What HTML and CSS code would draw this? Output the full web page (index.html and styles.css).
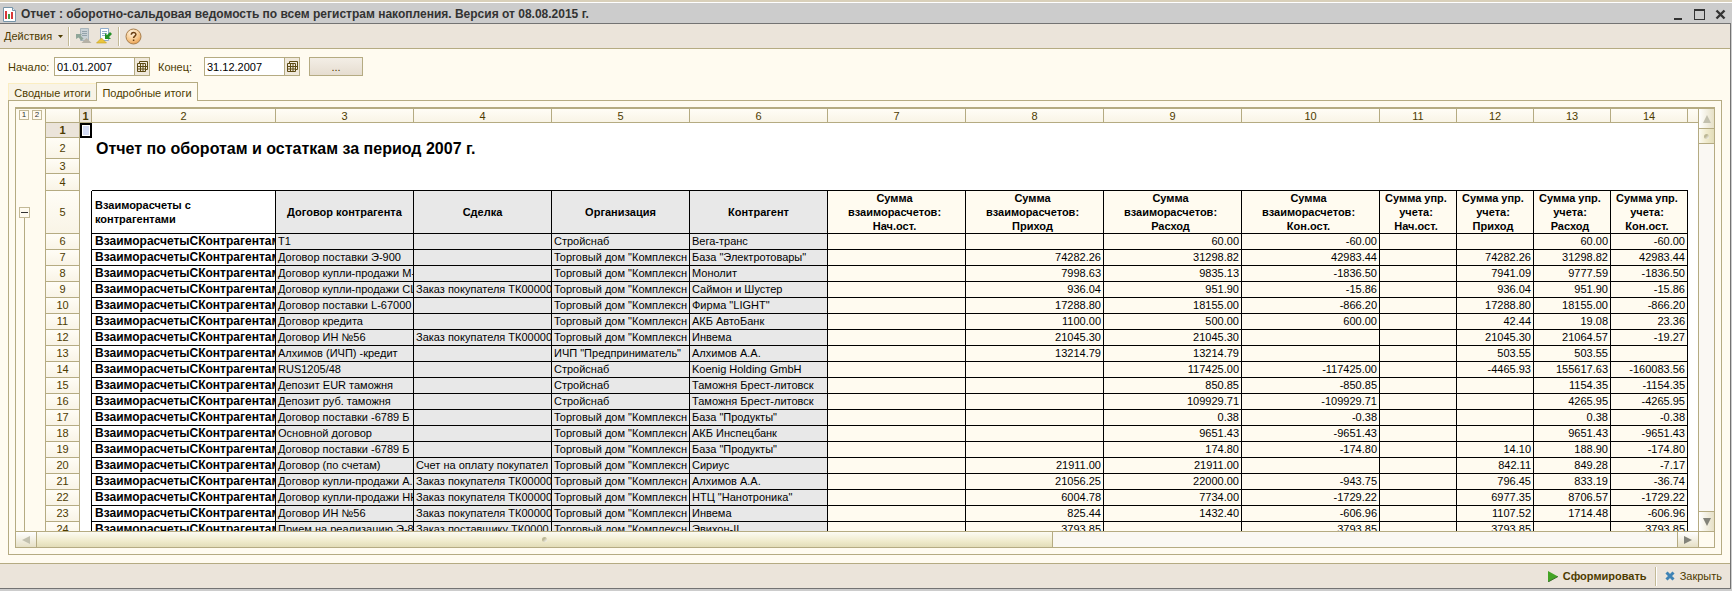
FILE: index.html
```html
<!DOCTYPE html>
<html lang="ru">
<head>
  <meta charset="UTF-8" />
  <meta name="viewport" content="width=device-width, initial-scale=1.0" />
  <title>Отчет : оборотно-сальдовая ведомость</title>
  <link rel="stylesheet" href="styles.css">
</head>
<body>

<header class="titlebar">
  <svg class="title-icon" width="13" height="15" viewBox="0 0 13 15">
    <path d="M.5.5h9l3 3v11H.5z" fill="#fff" stroke="#7795a8"/>
    <path d="M9.500.5v3h3" fill="#dbe6ee" stroke="#7795a8"/>
    <path d="M2 4h2v8H2z" fill="#d8383a"/>
    <path d="M5 7h2v5H5z" fill="#3f9c46"/>
    <path d="M8 5h2v7H8z" fill="#d8383a"/>
  </svg>
  <h1>Отчет : оборотно-сальдовая ведомость по всем регистрам накопления. Версия от 08.08.2015 г.</h1>
  <div class="window-buttons">
    <button aria-label="Свернуть"><svg width="11" height="11"><path d="M1 9h8v2H1z" fill="#333"/></svg></button>
    <button aria-label="Развернуть"><svg width="11" height="11"><path d="M0 0h11v11H0zM1 2v8h9V2z" fill="#333" fill-rule="evenodd"/></svg></button>
    <button aria-label="Закрыть окно"><svg width="11" height="11"><path d="M1.500 1.500l8 8M9.500 1.500l-8 8" stroke="#333" stroke-width="2.400"/></svg></button>
  </div>
</header>

<main class="window">
  <div class="toolbar">
    <button class="menu-button">Действия <svg width="5" height="3"><path d="M0 0h5L2.500 3z" fill="#4d3b00"/></svg></button>
    <span class="separator"></span>
    <button class="tool" aria-label="Восстановить значения">
      <svg width="17" height="16" viewBox="0 0 17 16">
        <path d="M5.500.500h8v12h-8z" fill="#c9d1d5" stroke="#a9b5bb"/>
        <path d="M7 3.500h5M7 5.500h5M7 7.500h5" stroke="#93a3ab"/>
        <path d="M1 6h6L5.500 7.500l3 3-2 2-3-3L1 11z" fill="#8fa598"/>
        <path d="M11.500 10l5 5h-10z" fill="#b5b1a6"/>
      </svg>
    </button>
    <button class="tool" aria-label="Сохранить значения">
      <svg width="17" height="16" viewBox="0 0 17 16">
        <path d="M4.500.500h8v12h-8z" fill="#fff" stroke="#8faccb"/>
        <path d="M6 3.500h5M6 5.500h5M6 7.500h4" stroke="#93aecb"/>
        <path d="M14 4l2 2-3 3 2 2H9V5l2 2z" fill="#249028"/>
        <path d="M5.500 10l5 5h-10z" fill="#eac53c" stroke="#c49d1b" stroke-width=".6"/>
      </svg>
    </button>
    <span class="separator"></span>
    <button class="tool" aria-label="Справка">
      <svg width="17" height="17" viewBox="0 0 17 17">
        <defs>
          <radialGradient id="help" cx=".4" cy=".25" r=".8">
            <stop offset="0" stop-color="#fff6e4"/>
            <stop offset=".6" stop-color="#f7c98d"/>
            <stop offset="1" stop-color="#e79b4b"/>
          </radialGradient>
        </defs>
        <circle cx="8.500" cy="8.500" r="7.500" fill="url(#help)" stroke="#a8804f"/>
        <path d="M6.300 6.800c0-3 4.600-3 4.600-.3 0 1.600-2.300 1.700-2.300 3.600M8.600 11.500v1.500" fill="none" stroke="#6b3f12" stroke-width="1.500"/>
      </svg>
    </button>
  </div>

  <form class="period">
    <label for="dateFrom">Начало:</label>
    <span class="date-field">
      <input type="text" id="dateFrom" value="01.01.2007" />
      <button type="button" aria-label="Выбрать начало"><svg width="11" height="11"><path d="M2.500 2.500v-2h8v8h-2M.500 2.500h8v8h-8zM.500 5.500h10M.500 8h8M3.500 2.500v8M6 2.500v8" fill="none" stroke="#5c4a12"/></svg></button>
    </span>
    <label for="dateTo">Конец:</label>
    <span class="date-field">
      <input type="text" id="dateTo" value="31.12.2007" />
      <button type="button" aria-label="Выбрать конец"><svg width="11" height="11"><path d="M2.500 2.500v-2h8v8h-2M.500 2.500h8v8h-8zM.500 5.500h10M.500 8h8M3.500 2.500v8M6 2.500v8" fill="none" stroke="#5c4a12"/></svg></button>
    </span>
    <button type="button" class="more">...</button>
  </form>

  <nav class="tabs" role="tablist">
    <button class="tab" role="tab">Сводные итоги</button>
    <button class="tab active" role="tab" aria-selected="true">Подробные итоги</button>
  </nav>

  <section class="tab-panel">
    <div class="sheet">
      <div class="groups">
        <div class="levels"><button>1</button><button>2</button></div>
        <button class="collapse" aria-label="Свернуть группу"></button>
        <div class="group-line"></div>
      </div>

      <div class="cells">
        <table>
          <colgroup>
            <col class="w-head"><col class="w-first"><col class="w-name">
            <col class="w-wide"><col class="w-wide"><col class="w-wide"><col class="w-wide">
            <col class="w-wide"><col class="w-wide"><col class="w-wide"><col class="w-wide">
            <col class="w-sum"><col class="w-sum"><col class="w-sum"><col class="w-sum"><col>
          </colgroup>
          <thead>
            <tr><th></th><th class="current">1</th><th>2</th><th>3</th><th>4</th><th>5</th><th>6</th><th>7</th><th>8</th><th>9</th><th>10</th><th>11</th><th>12</th><th>13</th><th>14</th><th></th></tr>
          </thead>
          <tbody>
            <tr class="h-small"><th class="current">1</th><td class="cursor"></td><td colspan="14"></td></tr>
            <tr class="h-title"><th>2</th><td></td><td colspan="14" class="report-title">Отчет по оборотам и остаткам за период 2007 г.</td></tr>
            <tr class="h-small"><th>3</th><td></td><td colspan="14"></td></tr>
            <tr class="h-gap"><th>4</th><td></td><td></td><td></td><td></td><td></td><td></td><td></td><td></td><td></td><td></td><td></td><td></td><td></td><td></td><td></td></tr>
            <tr class="captions"><th>5</th><td></td><td>Взаиморасчеты с контрагентами</td><td>Договор контрагента</td><td>Сделка</td><td>Организация</td><td>Контрагент</td><td>Сумма взаиморасчетов: Нач.ост.</td><td>Сумма взаиморасчетов: Приход</td><td>Сумма взаиморасчетов: Расход</td><td>Сумма взаиморасчетов: Кон.ост.</td><td>Сумма упр. учета: Нач.ост.</td><td>Сумма упр. учета: Приход</td><td>Сумма упр. учета: Расход</td><td>Сумма упр. учета: Кон.ост.</td><td></td></tr>
            <tr class="row"><th>6</th><td></td><td>ВзаиморасчетыСКонтрагентам</td><td>Т1</td><td></td><td>Стройснаб</td><td>Вега-транс</td><td></td><td></td><td>60.00</td><td>-60.00</td><td></td><td></td><td>60.00</td><td>-60.00</td><td></td></tr>
            <tr class="row"><th>7</th><td></td><td>ВзаиморасчетыСКонтрагентам</td><td>Договор поставки Э-900</td><td></td><td>Торговый дом "Комплексн</td><td>База "Электротовары"</td><td></td><td>74282.26</td><td>31298.82</td><td>42983.44</td><td></td><td>74282.26</td><td>31298.82</td><td>42983.44</td><td></td></tr>
            <tr class="row"><th>8</th><td></td><td>ВзаиморасчетыСКонтрагентам</td><td>Договор купли-продажи М-</td><td></td><td>Торговый дом "Комплексн</td><td>Монолит</td><td></td><td>7998.63</td><td>9835.13</td><td>-1836.50</td><td></td><td>7941.09</td><td>9777.59</td><td>-1836.50</td><td></td></tr>
            <tr class="row"><th>9</th><td></td><td>ВзаиморасчетыСКонтрагентам</td><td>Договор купли-продажи СШ</td><td>Заказ покупателя ТК00000</td><td>Торговый дом "Комплексн</td><td>Саймон и Шустер</td><td></td><td>936.04</td><td>951.90</td><td>-15.86</td><td></td><td>936.04</td><td>951.90</td><td>-15.86</td><td></td></tr>
            <tr class="row"><th>10</th><td></td><td>ВзаиморасчетыСКонтрагентам</td><td>Договор поставки L-67000</td><td></td><td>Торговый дом "Комплексн</td><td>Фирма "LIGHT"</td><td></td><td>17288.80</td><td>18155.00</td><td>-866.20</td><td></td><td>17288.80</td><td>18155.00</td><td>-866.20</td><td></td></tr>
            <tr class="row"><th>11</th><td></td><td>ВзаиморасчетыСКонтрагентам</td><td>Договор кредита</td><td></td><td>Торговый дом "Комплексн</td><td>АКБ АвтоБанк</td><td></td><td>1100.00</td><td>500.00</td><td>600.00</td><td></td><td>42.44</td><td>19.08</td><td>23.36</td><td></td></tr>
            <tr class="row"><th>12</th><td></td><td>ВзаиморасчетыСКонтрагентам</td><td>Договор ИН №56</td><td>Заказ покупателя ТК00000</td><td>Торговый дом "Комплексн</td><td>Инвема</td><td></td><td>21045.30</td><td>21045.30</td><td></td><td></td><td>21045.30</td><td>21064.57</td><td>-19.27</td><td></td></tr>
            <tr class="row"><th>13</th><td></td><td>ВзаиморасчетыСКонтрагентам</td><td>Алхимов (ИЧП) -кредит</td><td></td><td>ИЧП "Предприниматель"</td><td>Алхимов А.А.</td><td></td><td>13214.79</td><td>13214.79</td><td></td><td></td><td>503.55</td><td>503.55</td><td></td><td></td></tr>
            <tr class="row"><th>14</th><td></td><td>ВзаиморасчетыСКонтрагентам</td><td>RUS1205/48</td><td></td><td>Стройснаб</td><td>Koenig Holding GmbH</td><td></td><td></td><td>117425.00</td><td>-117425.00</td><td></td><td>-4465.93</td><td>155617.63</td><td>-160083.56</td><td></td></tr>
            <tr class="row"><th>15</th><td></td><td>ВзаиморасчетыСКонтрагентам</td><td>Депозит EUR таможня</td><td></td><td>Стройснаб</td><td>Таможня Брест-литовск</td><td></td><td></td><td>850.85</td><td>-850.85</td><td></td><td></td><td>1154.35</td><td>-1154.35</td><td></td></tr>
            <tr class="row"><th>16</th><td></td><td>ВзаиморасчетыСКонтрагентам</td><td>Депозит руб. таможня</td><td></td><td>Стройснаб</td><td>Таможня Брест-литовск</td><td></td><td></td><td>109929.71</td><td>-109929.71</td><td></td><td></td><td>4265.95</td><td>-4265.95</td><td></td></tr>
            <tr class="row"><th>17</th><td></td><td>ВзаиморасчетыСКонтрагентам</td><td>Договор поставки -6789 Б</td><td></td><td>Торговый дом "Комплексн</td><td>База "Продукты"</td><td></td><td></td><td>0.38</td><td>-0.38</td><td></td><td></td><td>0.38</td><td>-0.38</td><td></td></tr>
            <tr class="row"><th>18</th><td></td><td>ВзаиморасчетыСКонтрагентам</td><td>Основной договор</td><td></td><td>Торговый дом "Комплексн</td><td>АКБ Инспецбанк</td><td></td><td></td><td>9651.43</td><td>-9651.43</td><td></td><td></td><td>9651.43</td><td>-9651.43</td><td></td></tr>
            <tr class="row"><th>19</th><td></td><td>ВзаиморасчетыСКонтрагентам</td><td>Договор поставки -6789 Б</td><td></td><td>Торговый дом "Комплексн</td><td>База "Продукты"</td><td></td><td></td><td>174.80</td><td>-174.80</td><td></td><td>14.10</td><td>188.90</td><td>-174.80</td><td></td></tr>
            <tr class="row"><th>20</th><td></td><td>ВзаиморасчетыСКонтрагентам</td><td>Договор (по счетам)</td><td>Счет на оплату покупател</td><td>Торговый дом "Комплексн</td><td>Сириус</td><td></td><td>21911.00</td><td>21911.00</td><td></td><td></td><td>842.11</td><td>849.28</td><td>-7.17</td><td></td></tr>
            <tr class="row"><th>21</th><td></td><td>ВзаиморасчетыСКонтрагентам</td><td>Договор купли-продажи А.</td><td>Заказ покупателя ТК00000</td><td>Торговый дом "Комплексн</td><td>Алхимов А.А.</td><td></td><td>21056.25</td><td>22000.00</td><td>-943.75</td><td></td><td>796.45</td><td>833.19</td><td>-36.74</td><td></td></tr>
            <tr class="row"><th>22</th><td></td><td>ВзаиморасчетыСКонтрагентам</td><td>Договор купли-продажи НН</td><td>Заказ покупателя ТК00000</td><td>Торговый дом "Комплексн</td><td>НТЦ "Нанотроника"</td><td></td><td>6004.78</td><td>7734.00</td><td>-1729.22</td><td></td><td>6977.35</td><td>8706.57</td><td>-1729.22</td><td></td></tr>
            <tr class="row"><th>23</th><td></td><td>ВзаиморасчетыСКонтрагентам</td><td>Договор ИН №56</td><td>Заказ покупателя ТК00000</td><td>Торговый дом "Комплексн</td><td>Инвема</td><td></td><td>825.44</td><td>1432.40</td><td>-606.96</td><td></td><td>1107.52</td><td>1714.48</td><td>-606.96</td><td></td></tr>
            <tr class="row"><th>24</th><td></td><td>ВзаиморасчетыСКонтрагентам</td><td>Прием на реализацию Э-89</td><td>Заказ поставщику ТК0000</td><td>Торговый дом "Комплексн</td><td>Эвихон-II</td><td></td><td>3793.85</td><td></td><td>3793.85</td><td></td><td>3793.85</td><td></td><td>3793.85</td><td></td></tr>
          </tbody>
        </table>
      </div>

      <div class="vscroll">
        <button aria-label="Вверх"><svg width="8" height="8"><path d="M4 0l4 8H0z" fill="#c2c0ae"/></svg></button>
        <div class="thumb"><span class="grip"></span></div>
        <div class="track"></div>
        <button aria-label="Вниз"><svg width="8" height="8"><path d="M0 0h8L4 8z" fill="#83837a"/></svg></button>
      </div>
      <div class="hscroll">
        <button aria-label="Влево"><svg width="8" height="8"><path d="M8 0v8L0 4z" fill="#c2c0ae"/></svg></button>
        <div class="thumb"><span class="grip"></span></div>
        <div class="track"></div>
        <button aria-label="Вправо"><svg width="8" height="8"><path d="M0 0v8l8-4z" fill="#83837a"/></svg></button>
      </div>
      <div class="corner"></div>
    </div>
  </section>

  <footer class="actions">
    <button class="run"><svg width="10" height="11"><path d="M0 0l10 5.500L0 11z" fill="#43a425"/><path d="M0 11l10-5.500" stroke="#3b6b2c"/></svg>Сформировать</button>
    <span class="separator"></span>
    <button><svg width="10" height="10"><path d="M1.500 1.500l7 7M8.500 1.500l-7 7" stroke="#3f83b5" stroke-width="3"/></svg>Закрыть</button>
  </footer>
</main>

</body>
</html>
```

FILE: styles.css
```css
    * {
      box-sizing: border-box;
    }

    body {
      margin: 0;
      height: 100vh;
      display: flex;
      flex-direction: column;
      background: #ccc;
      border-top: 2px solid #d9d0ba;
      font-family: "Liberation Sans", Arial, sans-serif;
      font-size: 11px;
      color: #4d3b00;
      overflow: hidden;
    }

    button,
    input {
      font: inherit;
      color: inherit;
      margin: 0;
      padding: 0;
      border: none;
      border-radius: 0;
      background: none;
    }

    svg {
      display: block;
    }

    /* title bar */
    .titlebar {
      height: 21px;
      flex: none;
      display: flex;
      align-items: center;
      gap: 5px;
      padding: 2px 6px 0 3px;
      border-top: 1px solid #fff;
    }

    .titlebar h1 {
      flex: 1;
      margin: 0;
      font-size: 12px;
      font-weight: bold;
      color: #333;
    }

    .window-buttons {
      display: flex;
      gap: 10px;
    }

    /* window body */
    .window {
      flex: 1;
      min-height: 0;
      display: flex;
      flex-direction: column;
      margin: 0 1px 2px 0;
      border: 1px solid #737373;
      border-left: none;
      background: #fffbf0;
    }

    .toolbar {
      height: 25px;
      flex: none;
      display: flex;
      align-items: center;
      padding-left: 4px;
      background: #ebe4da;
      border-bottom: 1px solid #b5ab82;
    }

    .menu-button {
      display: flex;
      align-items: center;
      gap: 6px;
      margin-right: 2px;
    }

    .tool {
      display: flex;
      margin: 0 2px;
    }

    .separator {
      width: 2px;
      height: 19px;
      border-left: 1px solid #c3b996;
      border-right: 1px solid #fff;
      margin: 0 3px;
    }

    .period {
      display: flex;
      align-items: center;
      flex: none;
      padding: 8px 8px 0;
    }

    .period label {
      width: 46px;
    }

    .date-field {
      display: flex;
      width: 96px;
      height: 19px;
      margin-right: 8px;
      border: 1px solid #b5ab82;
      background: #fff;
    }

    .date-field input {
      flex: 1;
      min-width: 0;
      padding-left: 2px;
      color: #000;
    }

    .date-field button {
      width: 15px;
      display: flex;
      align-items: center;
      justify-content: center;
      border-left: 1px solid #b5ab82;
      background: #f0e9dc;
    }

    .more {
      width: 54px;
      height: 19px;
      margin-left: 1px;
      border: 1px solid #b5ab82;
      background: linear-gradient(#f3eee6, #e6ddd0);
    }

    /* tabs */
    .tabs {
      display: flex;
      align-items: flex-end;
      flex: none;
      padding: 6px 8px 0;
    }

    .tab {
      width: 88px;
      height: 17px;
      padding-top: 1px;
      background: #f8f3e6;
      border-top: 1px solid #fbeec2;
      border-left: 1px solid #fbeec2;
    }

    .tab.active {
      position: relative;
      z-index: 1;
      width: 102px;
      height: 19px;
      margin-bottom: -1px;
      background: #fffbf0;
      border: 1px solid #b5ab82;
      border-bottom: none;
    }

    .tab-panel {
      flex: 1;
      min-height: 0;
      display: flex;
      margin: 0 8px 8px;
      padding: 6px;
      border: 1px solid #b5ab82;
    }

    /* spreadsheet */
    .sheet {
      flex: 1;
      min-width: 0;
      display: grid;
      grid-template-columns: 29px minmax(0, 1fr) 16px;
      grid-template-rows: minmax(0, 1fr) 16px;
      border: 1px solid #b5ab82;
      border-top-width: 2px;
    }

    .groups {
      display: flex;
      flex-direction: column;
      align-items: flex-start;
    }

    .levels {
      display: flex;
      gap: 3px;
      padding: 1px 0 0 3px;
      margin-bottom: 87px;
    }

    .levels button,
    .collapse {
      width: 10px;
      height: 10px;
      font-size: 8px;
      line-height: 8px;
      border: 1px solid #c3b996;
      color: #333;
    }

    .collapse {
      width: 11px;
      height: 11px;
      margin-left: 3px;
      background: linear-gradient(#333, #333) center / 7px 1px no-repeat;
    }

    .group-line {
      flex: 1;
      margin-left: 8px;
      border-left: 1px solid #b5ab82;
    }

    .cells {
      overflow: hidden;
      background: #fff;
    }

    table {
      width: 100%;
      table-layout: fixed;
      border-collapse: separate;
      border-spacing: 0;
    }

    .w-head { width: 35px; }
    .w-first { width: 12px; }
    .w-name { width: 184px; }
    .w-wide { width: 138px; }
    .w-sum { width: 77px; }

    th {
      padding: 0;
      font-weight: normal;
      color: #4d3b00;
      background: linear-gradient(#fffdf6, #f9f4e6);
      border-right: 1px solid #b5ab82;
      border-bottom: 1px solid #b5ab82;
      line-height: 13px;
    }

    thead th {
      height: 14px;
      padding-top: 1px;
      line-height: 12px;
    }

    thead th:last-child {
      border-right: none;
    }

    th:first-child {
      border-left: 1px solid #b5ab82;
    }

    th.current {
      font-weight: bold;
      background: #ebe4da;
    }

    td {
      padding: 0;
      line-height: 14px;
      color: #000;
      white-space: nowrap;
      overflow: hidden;
    }

    .h-small { height: 15px; }
    .h-title { height: 21px; }
    .h-gap { height: 17px; }
    .captions { height: 43px; }
    .row { height: 16px; }

    .cursor {
      background: #d3daf3;
      border: 2px solid #000;
      box-shadow: inset 0 0 0 1px #fff;
    }

    .report-title {
      padding-left: 4px;
      font-size: 16px;
      font-weight: bold;
      line-height: 20px;
    }

    .h-gap td:nth-child(n+3):nth-child(-n+15) {
      border-bottom: 1px solid #000;
    }

    /* left edge of the report is the right border of column 1 */
    .captions td,
    .row td {
      border-right: 1px solid #000;
    }

    .captions td:nth-child(n+3),
    .row td:nth-child(n+3) {
      border-bottom: 1px solid #000;
      background: #fffbf0;
    }

    .captions td {
      padding: 0 8px 0 4px;
      font-weight: bold;
      text-align: center;
      white-space: normal;
    }

    .captions td:nth-child(2),
    .captions td:last-child {
      padding: 0;
    }

    .row td {
      padding: 0 2px 1px;
      line-height: 14px;
      text-align: right;
    }

    .captions td:nth-child(3),
    .row td:nth-child(3) {
      padding-left: 3px;
      text-align: left;
      background: #fff;
    }

    .row td:nth-child(3) {
      padding-right: 0;
      font-size: 12px;
      font-weight: bold;
    }

    .captions td:nth-child(n+4):nth-child(-n+7),
    .row td:nth-child(n+4):nth-child(-n+7) {
      background: #e8e8e8;
    }

    .captions td:nth-child(n+4):nth-child(-n+7) {
      padding: 0 2px;
    }

    .row td:nth-child(n+4):nth-child(-n+7) {
      padding-right: 0;
      text-align: left;
    }

    .captions td:last-child,
    .row td:last-child {
      border: none;
      background: #fff;
    }

    /* scrollbars */
    .vscroll,
    .hscroll {
      display: flex;
      background: #faf8f3;
    }

    .vscroll {
      flex-direction: column;
      border-left: 1px solid #b5ab82;
    }

    .hscroll {
      grid-column: 1 / 3;
      border-top: 1px solid #b5ab82;
    }

    .vscroll button,
    .hscroll button,
    .thumb {
      display: flex;
      align-items: center;
      justify-content: center;
      flex: none;
    }

    .vscroll button {
      height: 20px;
      background: linear-gradient(to right, #fff, #e6e0c6);
      border-bottom: 1px solid #b5ab82;
    }

    .vscroll button:last-child {
      border-top: 1px solid #b5ab82;
      border-bottom: none;
    }

    .hscroll button {
      width: 21px;
      background: linear-gradient(#fff, #e6e0c6);
      border-right: 1px solid #b5ab82;
    }

    .hscroll button:last-child {
      border-left: 1px solid #b5ab82;
      border-right: none;
    }

    .track {
      flex: 1;
    }

    .vscroll .thumb {
      height: 15px;
      background: linear-gradient(to right, #fcfbf3, #f0ebcd, #e2dcb8);
      border-bottom: 1px solid #b5ab82;
    }

    .hscroll .thumb {
      flex: 0 0 60.4%;
      background: linear-gradient(#fcfbf3, #f0ebcd 60%, #e2dcb8);
      border-right: 1px solid #b5ab82;
    }

    .grip {
      width: 5px;
      height: 5px;
      border-radius: 50%;
      background: linear-gradient(135deg, #bdb896 40%, #fff);
    }

    .corner {
      background: #fffbf0;
      border-top: 1px solid #b5ab82;
      border-left: 1px solid #b5ab82;
    }

    /* bottom bar */
    .actions {
      height: 25px;
      flex: none;
      display: flex;
      align-items: center;
      justify-content: flex-end;
      padding-right: 8px;
      background: #ebe4da;
      border-top: 1px solid #b5ab82;
    }

    .actions button {
      display: flex;
      align-items: center;
      gap: 5px;
    }

    .actions .separator {
      margin: 0 8px;
    }

    .actions .run {
      font-weight: bold;
    }
```
